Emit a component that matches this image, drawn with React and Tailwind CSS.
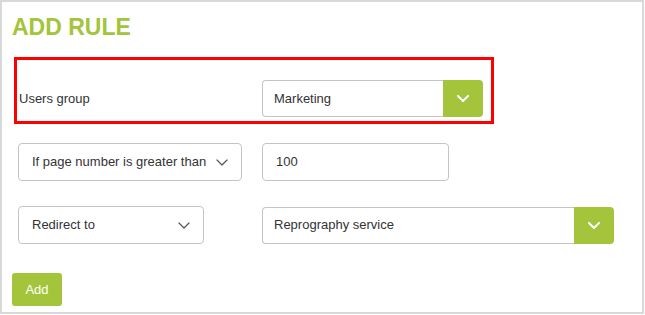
import React from 'react';

const green = 'bg-[#a3c43b]';

function Chevron({ white }) {
  return (
    <svg width="12" height="7" viewBox="0 0 12 7" fill="none">
      <polyline
        points="1,1 6,6 11,1"
        stroke={white ? '#ffffff' : '#555555'}
        strokeWidth={white ? 2 : 1.2}
        strokeLinecap="round"
        strokeLinejoin="round"
      />
    </svg>
  );
}

function GreenSelect({ value, width, h }) {
  return (
    <div className={`flex ${width} ${h}`}>
      <div className="flex-1 flex items-center pl-[11px] border border-[#c4c4c4] border-r-0 rounded-l-[4px] text-[13px] text-[#333]">
        {value}
      </div>
      <div className={`w-[40px] flex items-center justify-center rounded-r-[4px] ${green}`}>
        <Chevron white />
      </div>
    </div>
  );
}

function PlainSelect({ value, width }) {
  return (
    <div className={`flex items-center justify-between ${width} h-[38px] pl-[13px] pr-[13px] border border-[#c4c4c4] rounded-[4px] text-[13px] text-[#333]`}>
      <span>{value}</span>
      <Chevron />
    </div>
  );
}

export default function App() {
  return (
    <div className="w-[645px] h-[315px] bg-white font-['Liberation_Sans',Arial,sans-serif]">
      <div className="w-[644px] h-[314px] border-2 border-[#d9d9d9] pl-[10px] pt-[11px] flex flex-col items-start">
        <h1 className="text-[23px] leading-[28px] font-bold text-[#a3c43b]">ADD RULE</h1>

        <div className="mt-[16px] ml-[2px] w-[480px] h-[67px] border-[3px] border-[#ff0000] flex items-center pt-[17px] pb-[1px]">
          <div className="w-[245px] pl-[2px] text-[13px] text-[#333]">Users group</div>
          <GreenSelect value="Marketing" width="w-[221px]" h="h-[37px]" />
        </div>

        <div className="mt-[19px] ml-[6px] flex items-center gap-[20px]">
          <PlainSelect value="If page number is greater than" width="w-[224px]" />
          <div className="w-[187px] h-[38px] flex items-center pl-[13px] border border-[#c4c4c4] rounded-[4px] text-[13px] text-[#333]">
            100
          </div>
        </div>

        <div className="mt-[25px] ml-[6px] flex items-center gap-[58px]">
          <PlainSelect value="Redirect to" width="w-[186px]" />
          <GreenSelect value="Reprography service" width="w-[352px]" h="h-[37px]" />
        </div>

        <button className={`mt-[29px] w-[50px] h-[33px] rounded-[3px] ${green} text-white text-[13px]`}>
          Add
        </button>
      </div>
    </div>
  );
}
